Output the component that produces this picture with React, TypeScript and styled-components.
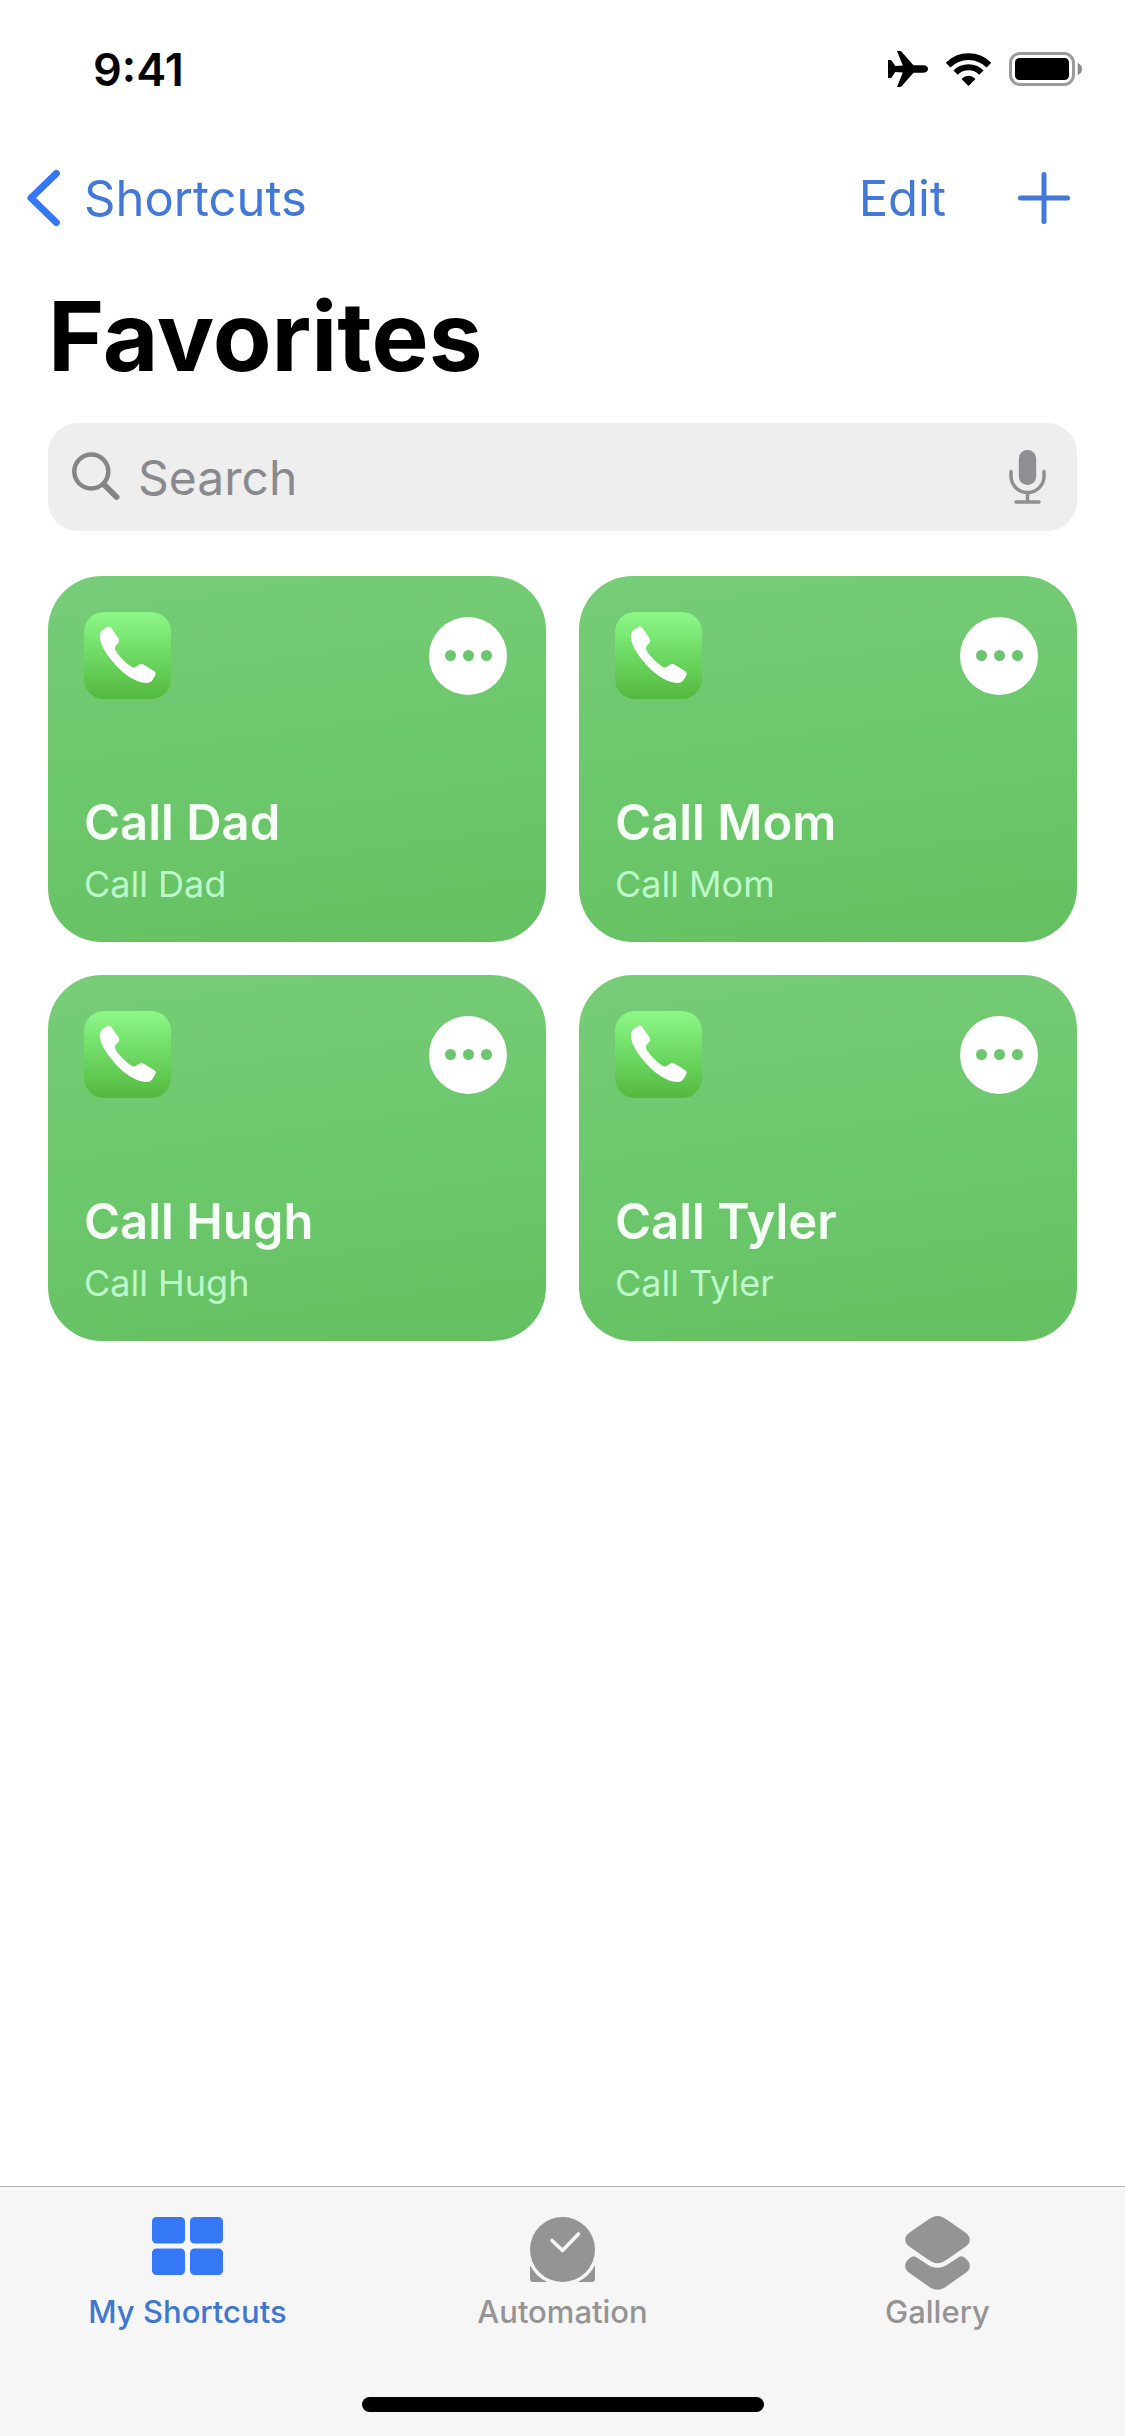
import React from "react";
import styled, { createGlobalStyle } from "styled-components";

const blue = "#3478f6";
const grey = "#8a8a8e";

const GlobalStyle = createGlobalStyle`
  * { box-sizing: border-box; }
  body {
    margin: 0;
    background: #fff;
    color: #000;
    font-family: Inter, "Liberation Sans", sans-serif;
  }
  h1, h2, p { margin: 0; }
  button {
    border: 0;
    padding: 0;
    background: none;
    font: inherit;
    color: inherit;
    cursor: pointer;
  }
  svg { display: block; flex: none; }
`;

const Screen = styled.div`
  display: flex;
  flex-direction: column;
  min-height: 100vh;
`;

const StatusBar = styled.div`
  display: flex;
  align-items: center;
  justify-content: space-between;
  height: 138px;
  padding: 0 43px 0 93px;
`;

const Time = styled.time`
  font-size: 45px;
  font-weight: 600;
`;

const StatusIcons = styled.div`
  display: flex;
  align-items: center;
  gap: 18px;
`;

const NavBar = styled.nav`
  display: flex;
  align-items: center;
  justify-content: space-between;
  height: 120px;
  padding: 0 55px 0 27px;
  color: #4279d8;
  font-size: 49px;
`;

const BackLink = styled.a`
  display: flex;
  align-items: center;
  gap: 24px;
  color: inherit;
  text-decoration: none;
`;

const NavActions = styled.div`
  display: flex;
  align-items: center;
  gap: 72px;
`;

const Content = styled.main`
  display: flex;
  flex-direction: column;
  padding: 18px 48px 48px;
`;

const PageTitle = styled.h1`
  font-size: 96px;
  line-height: 120px;
  font-weight: 700;
`;

const SearchField = styled.div`
  display: flex;
  align-items: center;
  height: 108px;
  margin: 27px 0 45px;
  padding: 0 31px 0 24px;
  border-radius: 30px;
  background: #eeeeef;
  color: ${grey};
`;

const SearchInput = styled.input`
  flex: 1;
  min-width: 0;
  border: 0;
  padding: 0 18px;
  outline: 0;
  background: none;
  font: inherit;
  font-size: 48px;
  color: #000;
  &::placeholder {
    color: ${grey};
    opacity: 1;
  }
`;

const CardGrid = styled.div`
  display: grid;
  grid-template-columns: 1fr 1fr;
  gap: 33px;
`;

const Card = styled.article`
  display: flex;
  flex-direction: column;
  padding: 36px 39px 34px 36px;
  border-radius: 54px;
  background: linear-gradient(172deg, #77cc78 0%, #6cc86c 50%, #64c060 100%);
`;

const CardHeader = styled.div`
  display: flex;
  align-items: center;
  justify-content: space-between;
  margin-bottom: 94px;
`;

const AppIcon = styled.div`
  width: 87px;
  height: 87px;
  border-radius: 20px;
  background: linear-gradient(180deg, #8df888 0%, #6dd963 50%, #54b83e 100%);
`;

const MoreButton = styled.button`
  display: flex;
  align-items: center;
  justify-content: center;
  gap: 7px;
  width: 78px;
  height: 78px;
  border-radius: 50%;
  background: #fff;
`;

const Dot = styled.span`
  width: 11px;
  height: 11px;
  border-radius: 50%;
  background: #6cc56f;
`;

const CardTitle = styled.h2`
  font-size: 49px;
  line-height: 60px;
  font-weight: 600;
  color: #f6fff6;
`;

const CardSubtitle = styled.p`
  margin-top: 7px;
  font-size: 36px;
  line-height: 48px;
  color: #bdf8ca;
`;

const TabBar = styled.footer`
  margin-top: auto;
  padding: 29px 0 24px;
  border-top: 1px solid #b2b2b2;
  background: #f6f6f6;
`;

const Tabs = styled.nav`
  display: grid;
  grid-template-columns: repeat(3, 1fr);
`;

const Tab = styled.a<{ $active?: boolean }>`
  display: flex;
  flex-direction: column;
  align-items: center;
  gap: 4px;
  color: ${(p) => (p.$active ? "#3f77d2" : "#949494")};
  font-size: 31px;
  line-height: 36px;
  font-weight: 500;
  text-decoration: none;
`;

const TabIcon = styled.span`
  height: 74px;
`;

const HomeIndicator = styled.div`
  width: 402px;
  max-width: 60%;
  height: 15px;
  margin: 67px auto 0;
  border-radius: 8px;
  background: #000;
`;

const AirplaneIcon = () => (
  <svg width="40" height="36" viewBox="0 0 40 36" aria-hidden="true">
    <path d="M9 0h3q1 0 1.800 1L25.500 14.300H35.500C38.500 14.300 40 16.200 40 18s-1.500 3.700-4.500 3.700H25.500L13.800 35q-.8 1-1.800 1H9l5.800-14.400-7.500-.5L3.600 26.400Q3.200 27 2.500 27H0V9h2.500q.7 0 1.100.6l3.700 5.300 7.500-.5Z" />
  </svg>
);

const WifiIcon = () => (
  <svg width="45" height="33" viewBox="0 0 45 33" fill="none" stroke="#000" aria-hidden="true">
    <path d="M2.100 12.100A28.800 28.800 0 0 1 42.900 12.100" strokeWidth="6.600" />
    <path d="M9.600 19.600A18.200 18.200 0 0 1 35.400 19.600" strokeWidth="6.200" />
    <path d="M22.500 32 16.500 26A8.500 8.500 0 0 1 28.500 26Z" fill="#000" strokeWidth="1.500" strokeLinejoin="round" />
  </svg>
);

const BatteryIcon = () => (
  <svg width="73" height="34" viewBox="0 0 73 34" aria-hidden="true">
    <rect x="1.500" y="1.500" width="63" height="31" rx="9.500" fill="none" stroke="#9b9b9b" strokeWidth="3" />
    <rect x="6" y="6" width="54" height="22" rx="4.500" />
    <path d="M68.700 11q4.300 1.500 4.300 6t-4.300 6Z" fill="#8c8c8c" />
  </svg>
);

const ChevronIcon = () => (
  <svg width="33" height="58" viewBox="0 0 33 58" fill="none" stroke={blue} strokeWidth="7" strokeLinecap="round" strokeLinejoin="round" aria-hidden="true">
    <path d="M29.300 4.500 4 29 29.300 53.500" />
  </svg>
);

const PlusIcon = () => (
  <svg width="52" height="54" viewBox="0 0 52 54" stroke="#4279d8" strokeWidth="5" strokeLinecap="round" aria-hidden="true">
    <path d="M2.500 27h47M26 3.500v47" />
  </svg>
);

const SearchIcon = () => (
  <svg width="48" height="50" viewBox="0 0 48 50" fill="none" stroke="#858588" strokeLinecap="round" aria-hidden="true">
    <circle cx="19.300" cy="19.500" r="17" strokeWidth="4.500" />
    <path d="m32 32.500 12.500 12.500" strokeWidth="6" />
  </svg>
);

const MicIcon = () => (
  <svg width="37" height="54" viewBox="0 0 37 54" fill="none" stroke="#8e8e93" strokeWidth="3.500" strokeLinecap="round" aria-hidden="true">
    <rect x="9.800" y="0" width="17.400" height="35" rx="8.500" fill="#8e8e93" stroke="none" />
    <path d="M2 21.500v4.500a16.500 16.500 0 0 0 33 0v-4.500M18.500 43v9M7 52h23" />
  </svg>
);

const PhoneIcon = () => (
  <svg width="87" height="87" viewBox="0 0 87 87" fill="#fff" aria-hidden="true">
    <path d="M18.500 18 23.500 15Q26 13.800 27.500 16.200L34.500 26.300Q36 28.500 34.200 31L31.500 34Q30.200 36 31.500 38.500C35.500 45 42 51 48 55Q50 56.200 52 54.800L55.500 52.500Q57.500 51.300 59.800 52.700L70 59Q72.600 60.700 71.300 63.300L68.500 68Q66.500 71.200 62 71C53 70.500 43 64.500 35 56.500C26 47.500 16 34.500 16 25Q16 20 18.500 18Z" />
  </svg>
);

const GridIcon = () => (
  <svg width="71" height="60" viewBox="0 0 71 60" fill={blue} aria-hidden="true">
    <rect y="1" width="33" height="26.500" rx="4.500" />
    <rect x="38" y="1" width="33" height="26.500" rx="4.500" />
    <rect y="32.500" width="33" height="26.500" rx="4.500" />
    <rect x="38" y="32.500" width="33" height="26.500" rx="4.500" />
  </svg>
);

const ClockIcon = () => (
  <svg width="65" height="67" viewBox="0 0 65 67" aria-hidden="true">
    <path d="M0 50h65v13q0 3-3 3H3q-3 0-3-3Z" fill="#949494" />
    <circle cx="32.500" cy="33.500" r="36" fill="#f6f6f6" />
    <circle cx="32.500" cy="33.500" r="32.500" fill="#949494" />
    <path d="M22 24.500 32.500 34.500 48.500 18" fill="none" stroke="#f6f6f6" strokeWidth="3.600" strokeLinecap="round" strokeLinejoin="round" />
  </svg>
);

const GalleryIcon = () => (
  <svg width="65" height="74" viewBox="0 0 65 74" fill="#949494" aria-hidden="true">
    <path d="M23 3.800C26.500 1.300 29 0 32.500 0S38.500 1.300 42 3.800L59 15.500C63 18.300 64.800 20.500 64.800 23.700S63 29 59 31.800L42 43.600C38.500 46 36 47.300 32.500 47.300S26.500 46 23 43.600L6 31.800C2 29 .2 26.900 .2 23.700S2 18.300 6 15.500Z" />
    <path d="M6.500 41Q8.500 39.500 10.500 40.800L22.500 48.500C26 50.700 28.500 51.800 32.500 51.800S39 50.700 42.500 48.500L54.500 40.800Q56.500 39.500 58.500 41C63 44 64.800 46.500 64.800 50S63 55.300 59 58L42 70C38.500 72.500 36 73.800 32.500 73.800S26.500 72.500 23 70L6 58C2 55.300 .2 53.500 .2 50S2 44 6.500 41Z" />
  </svg>
);

const shortcuts = ["Call Dad", "Call Mom", "Call Hugh", "Call Tyler"];

const tabs = [
  { label: "My Shortcuts", Icon: GridIcon, active: true },
  { label: "Automation", Icon: ClockIcon, active: false },
  { label: "Gallery", Icon: GalleryIcon, active: false },
];

const ShortcutCard = ({ name }: { name: string }) => (
  <Card>
    <CardHeader>
      <AppIcon>
        <PhoneIcon />
      </AppIcon>
      <MoreButton type="button" aria-label={`Edit ${name}`}>
        <Dot />
        <Dot />
        <Dot />
      </MoreButton>
    </CardHeader>
    <CardTitle>{name}</CardTitle>
    <CardSubtitle>{name}</CardSubtitle>
  </Card>
);

export default function App() {
  return (
    <Screen>
      <GlobalStyle />
      <StatusBar>
        <Time>9:41</Time>
        <StatusIcons>
          <AirplaneIcon />
          <WifiIcon />
          <BatteryIcon />
        </StatusIcons>
      </StatusBar>
      <NavBar>
        <BackLink href="#shortcuts">
          <ChevronIcon />
          Shortcuts
        </BackLink>
        <NavActions>
          <button type="button">Edit</button>
          <button type="button" aria-label="Add shortcut">
            <PlusIcon />
          </button>
        </NavActions>
      </NavBar>
      <Content>
        <PageTitle>Favorites</PageTitle>
        <SearchField>
          <SearchIcon />
          <SearchInput type="text" placeholder="Search" aria-label="Search" />
          <button type="button" aria-label="Dictate">
            <MicIcon />
          </button>
        </SearchField>
        <CardGrid>
          {shortcuts.map((name) => (
            <ShortcutCard key={name} name={name} />
          ))}
        </CardGrid>
      </Content>
      <TabBar>
        <Tabs>
          {tabs.map(({ label, Icon, active }) => (
            <Tab key={label} href="#" $active={active}>
              <TabIcon>
                <Icon />
              </TabIcon>
              {label}
            </Tab>
          ))}
        </Tabs>
        <HomeIndicator />
      </TabBar>
    </Screen>
  );
}
